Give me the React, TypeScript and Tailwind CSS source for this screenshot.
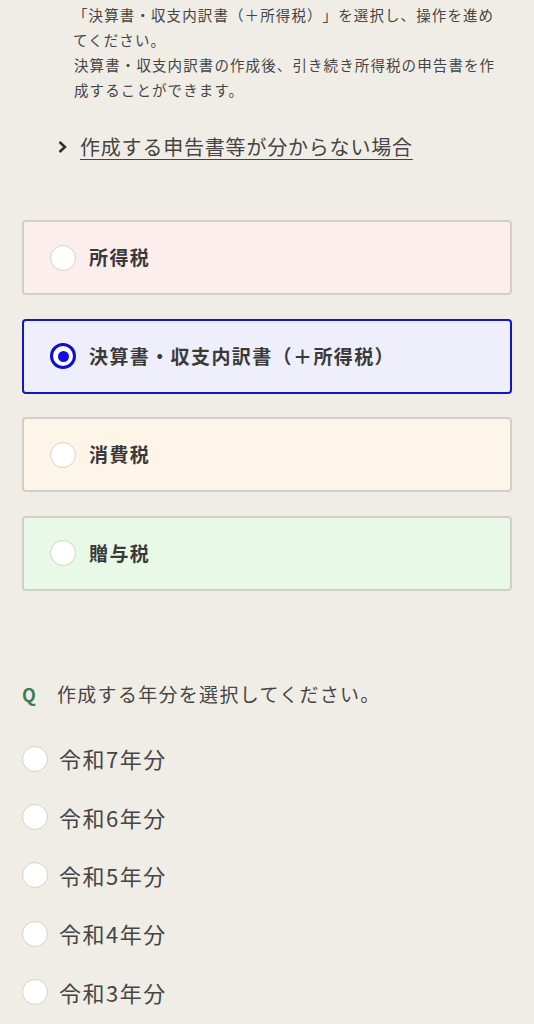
import { useState } from "react";

const taxTypes = [
	{ id: "income", label: "所得税", bg: "bg-[#fdeeee]" },
	{ id: "statement", label: "決算書・収支内訳書（＋所得税）", bg: "bg-[#eeeffb]" },
	{ id: "consumption", label: "消費税", bg: "bg-[#fdf5e8]" },
	{ id: "gift", label: "贈与税", bg: "bg-[#e8f9e8]" },
];

const years = ["令和7年分", "令和6年分", "令和5年分", "令和4年分", "令和3年分"];

const Radio = ({ checked }: { checked: boolean }) => {
	if (checked) {
		return (
			<span className="w-[26px] h-[26px] shrink-0 rounded-full border-[3px] border-[#0f0fd0] bg-white flex items-center justify-center">
				<span className="w-[11px] h-[11px] rounded-full bg-[#0f0fe6]" />
			</span>
		);
	}
	return <span className="w-[26px] h-[26px] shrink-0 rounded-full border border-[#d6d1cb] bg-white" />;
};

const App = () => {
	const [tax, setTax] = useState("statement");
	const [year, setYear] = useState("");

	return (
		<div
			className="w-full min-h-screen bg-[#f0ede6] text-[#454545] px-[22px] overflow-hidden [text-spacing-trim:space-all]"
			style={{ fontFamily: '"Noto Sans CJK JP", "Noto Sans", sans-serif' }}>
			<div className="pl-[52px] pr-[10px] pt-[2px] text-[14.5px] leading-[25px] tracking-[1.1px]">
				<p className="-ml-[1px]">「決算書・収支内訳書（＋所得税）」を選択し、操作を進めてください。</p>
				<p>決算書・収支内訳書の作成後、引き続き所得税の申告書を作成することができます。</p>
			</div>

			<div className="mt-[30px] h-[30px] pl-[35px] flex items-center">
				<svg width="11" height="14" viewBox="0 0 11 14" className="shrink-0">
					<polyline points="2.5,2 8,7 2.5,12" fill="none" stroke="#2e2e2e" strokeWidth="2.5" />
				</svg>
				<a href="#" className="ml-[12px] text-[20px] tracking-[0.8px] underline underline-offset-[4px] decoration-[1px] text-[#444]">
					作成する申告書等が分からない場合
				</a>
			</div>

			<div className="mt-[58px] flex flex-col gap-[23.5px]">
				{taxTypes.map((t) => {
					const checked = tax === t.id;
					return (
						<button
							key={t.id}
							onClick={() => setTax(t.id)}
							className={`h-[75px] w-full rounded-[4px] border-2 ${checked ? "border-[#1414c8]" : "border-[#d2cecb]"} ${t.bg} flex items-center pl-[26px] text-left`}>
							<Radio checked={checked} />
							<span className="ml-[13px] text-[19px] font-bold tracking-[1.4px] text-[#3a3a3a]">{t.label}</span>
						</button>
					);
				})}
			</div>

			<div className="mt-[89px] h-[30px] flex items-center">
				<span className="w-[22px] text-[18px] font-bold text-[#3b7d4c]">Q</span>
				<span className="ml-[13px] text-[19px] tracking-[1.3px]">作成する年分を選択してください。</span>
			</div>

			<div className="mt-[20px] flex flex-col">
				{years.map((y) => (
					<button key={y} onClick={() => setYear(y)} className="h-[58.4px] flex items-center text-left">
						<Radio checked={year === y} />
						<span className="ml-[11px] text-[22px] tracking-[1.5px] text-[#454545]">{y}</span>
					</button>
				))}
			</div>
		</div>
	);
};

export default App;
